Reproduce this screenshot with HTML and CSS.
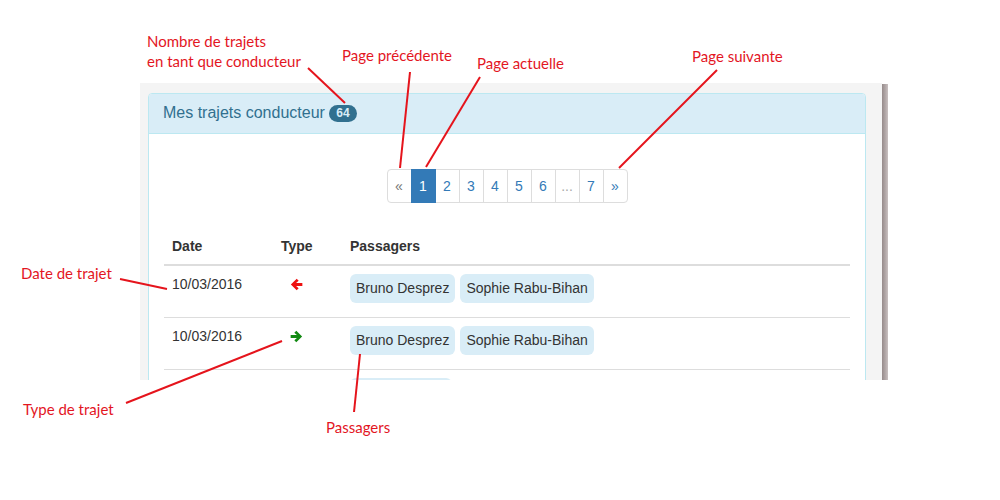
FILE: index.html
```html
<!DOCTYPE html>
<html lang="fr">
<head>
<meta charset="utf-8">
<title>Mes trajets conducteur</title>
<link rel="stylesheet" href="styles.css">
</head>
<body>
<div class="stage">
  <div class="shot">
    <div class="frame">
      <div class="panel">
        <div class="panel-heading">
          <h3 class="panel-title">Mes trajets conducteur <span class="badge">64</span></h3>
        </div>
        <div class="panel-body">
          <div class="pager-wrap">
            <ul class="pagination">
              <li class="disabled"><span>&laquo;</span></li>
              <li class="active"><span>1</span></li>
              <li><a href="#">2</a></li>
              <li><a href="#">3</a></li>
              <li><a href="#">4</a></li>
              <li><a href="#">5</a></li>
              <li><a href="#">6</a></li>
              <li class="ellipsis"><span>...</span></li>
              <li><a href="#">7</a></li>
              <li><a href="#">&raquo;</a></li>
            </ul>
          </div>
          <table class="table">
            <thead>
              <tr><th class="col-date">Date</th><th class="col-type">Type</th><th>Passagers</th></tr>
            </thead>
            <tbody>
              <tr>
                <td>10/03/2016</td>
                <td><svg class="arrow arrow-back" viewBox="0 0 12 12" width="13" height="13"><path d="M6.2 0.8 L0.8 6 L6.2 11.2 L8 9.4 L5.6 7.3 H11.4 V4.7 H5.6 L8 2.6 Z"/></svg></td>
                <td><div class="labels"><span class="label">Bruno Desprez</span><span class="label">Sophie Rabu-Bihan</span></div></td>
              </tr>
              <tr>
                <td>10/03/2016</td>
                <td><svg class="arrow arrow-go" viewBox="0 0 12 12" width="13" height="13"><path d="M5.8 0.8 L11.2 6 L5.8 11.2 L4 9.4 L6.4 7.3 H0.6 V4.7 H6.4 L4 2.6 Z"/></svg></td>
                <td><div class="labels"><span class="label">Bruno Desprez</span><span class="label">Sophie Rabu-Bihan</span></div></td>
              </tr>
              <tr aria-hidden="true">
                <td></td>
                <td></td>
                <td><div class="labels"><span class="label label-stub"></span></div></td>
              </tr>
            </tbody>
          </table>
        </div>
      </div>
    </div>
    <div class="edge"></div>
  </div>

  <svg class="leaders" viewBox="0 0 1000 500" width="1000" height="500">
    <line x1="308" y1="68" x2="345" y2="103"/>
    <line x1="410" y1="72" x2="400" y2="168"/>
    <line x1="480" y1="77" x2="426" y2="167"/>
    <line x1="717" y1="70" x2="619" y2="168"/>
    <line x1="120" y1="279" x2="167" y2="289"/>
    <line x1="126" y1="403" x2="282" y2="341"/>
    <line x1="354" y1="412" x2="360" y2="354"/>
  </svg>

  <div class="note note-count">Nombre de trajets<br>en tant que conducteur</div>
  <div class="note note-prev">Page précédente</div>
  <div class="note note-current">Page actuelle</div>
  <div class="note note-next">Page suivante</div>
  <div class="note note-date">Date de trajet</div>
  <div class="note note-type">Type de trajet</div>
  <div class="note note-pass">Passagers</div>
</div>
</body>
</html>
```

FILE: styles.css
```css
* { box-sizing: border-box; }

html, body {
  margin: 0;
  padding: 0;
  background: #ffffff;
}

body {
  font-family: "Liberation Sans", Arial, sans-serif;
  font-size: 14px;
  line-height: 20px;
  color: #333333;
}

.stage {
  position: relative;
  width: 1000px;
  height: 500px;
  padding-top: 83px;
  padding-left: 140px;
  overflow: hidden;
}

/* the framed screenshot */
.shot {
  display: flex;
  width: 748px;
  height: 297px;
}

.frame {
  flex: 1;
  background: #f4f4f4;
  padding: 10px 16px 0 8px;
  overflow: hidden;
}

.edge {
  width: 6px;
  margin-top: 1px;
  background: linear-gradient(to right, #968b8b, #b3a9a9 60%, #c9c1c1);
}

/* panel */
.panel {
  background: #ffffff;
  border: 1px solid #bce8f1;
  border-radius: 4px;
}

.panel-heading {
  background: #d9edf7;
  color: #31708f;
  border-bottom: 1px solid #bce8f1;
  border-radius: 3px 3px 0 0;
  padding: 10px 14px 11px;
}

.panel-title {
  margin: 0;
  font-size: 16px;
  font-weight: normal;
  line-height: 18px;
}

.badge {
  display: inline-block;
  vertical-align: 1px;
  padding: 3px 7px;
  font-size: 12px;
  font-weight: bold;
  line-height: 11px;
  color: #d9edf7;
  background: #31708f;
  border-radius: 10px;
}

.panel-body {
  padding: 15px 15px 15px;
}

/* pagination */
.pager-wrap {
  display: flex;
  justify-content: center;
  margin: 20px 0 25px;
}

.pagination {
  display: flex;
  list-style: none;
  margin: 0;
  padding: 0;
}

.pagination li > a,
.pagination li > span {
  display: block;
  width: 25px;
  margin-left: -1px;
  padding: 6px 0;
  line-height: 20px;
  text-align: center;
  color: #337ab7;
  text-decoration: none;
  background: #ffffff;
  border: 1px solid #dddddd;
}

.pagination li:first-child > span {
  margin-left: 0;
  border-radius: 4px 0 0 4px;
}

.pagination li:last-child > a {
  border-radius: 0 4px 4px 0;
}

.pagination .disabled > span {
  color: #777777;
}

.pagination .ellipsis > span {
  color: #aaaaaa;
}

.pagination .active > span {
  position: relative;
  color: #ffffff;
  background: #337ab7;
  border-color: #337ab7;
}

/* table */
.table {
  width: 100%;
  border-collapse: collapse;
  border-spacing: 0;
}

.table th {
  text-align: left;
  font-weight: bold;
  padding: 8px;
  border-bottom: 2px solid #dddddd;
}

.table td {
  padding: 8px;
  vertical-align: top;
  border-top: 1px solid #dddddd;
}

.col-date { width: 109px; }
.col-type { width: 69px; }

.arrow {
  display: block;
  margin: 4px 0 0 9px;
}

.arrow-back { fill: #ee1111; }
.arrow-go { fill: #138a13; }

.labels {
  display: flex;
  flex-wrap: wrap;
  gap: 5px;
}

.label {
  display: block;
  padding: 4px 6px;
  line-height: 21px;
  background: #d9edf7;
  color: #333333;
  border-radius: 6px;
  margin-bottom: 6px;
}

.label-stub {
  width: 102px;
  height: 29px;
}

/* annotation overlay */
.leaders {
  position: absolute;
  left: 0;
  top: 0;
  pointer-events: none;
}

.leaders line {
  stroke: #e5141c;
  stroke-width: 2;
}

.note {
  position: absolute;
  font-family: Lato, "Open Sans", sans-serif;
  font-size: 15px;
  line-height: 20px;
  color: #e3161f;
  white-space: nowrap;
}

.note-count   { left: 147px; top: 31px; }
.note-prev    { left: 342px; top: 45px; }
.note-current { left: 477px; top: 53px; }
.note-next    { left: 692px; top: 46px; }
.note-date    { left: 21px;  top: 263px; }
.note-type    { left: 23px;  top: 399px; }
.note-pass    { left: 326px; top: 417px; }
```
